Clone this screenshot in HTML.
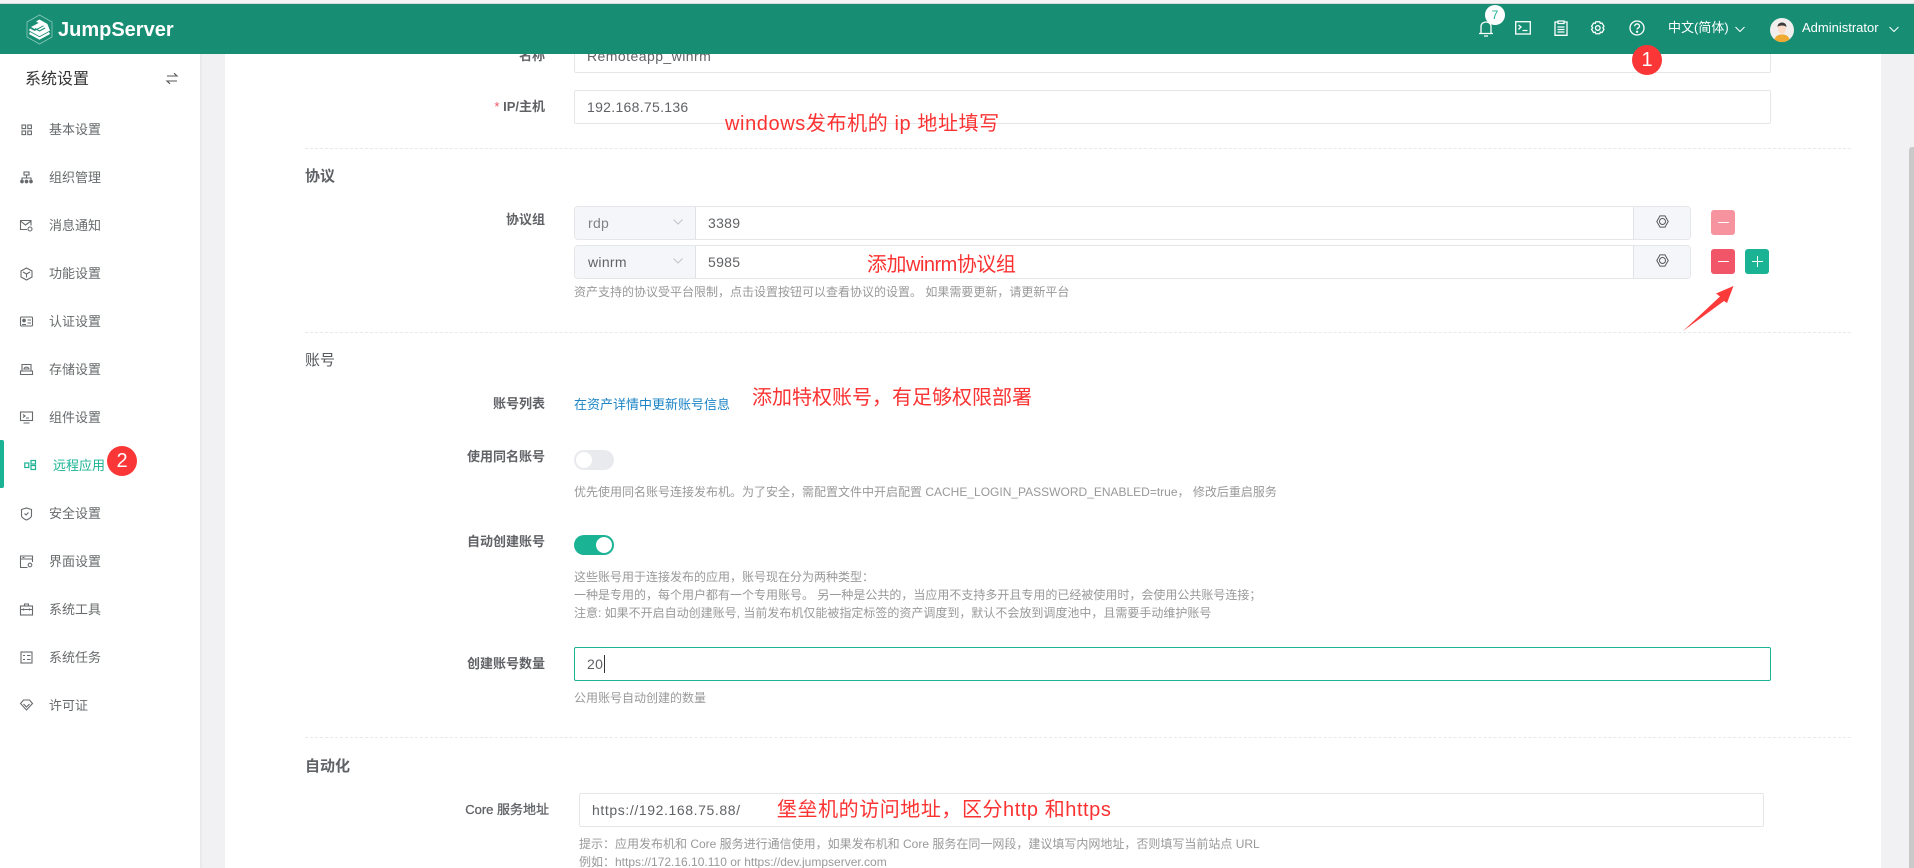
<!DOCTYPE html>
<html lang="zh-CN">
<head>
<meta charset="utf-8">
<title>JumpServer</title>
<style>
html,body{margin:0;padding:0;width:1914px;height:868px;overflow:hidden;background:#fff}
body{position:relative;font-family:"Liberation Sans","Noto Sans CJK SC",sans-serif;font-size:13px;color:#676a6c}
.a{position:absolute}
.t{position:absolute;white-space:nowrap;line-height:20px;height:20px}
.r{text-align:right;font-weight:700;color:#606266;font-size:13px}
.h{font-size:15px;font-weight:700;color:#5f6266;left:305px}
.m{font-size:13px;color:#676a6c;left:49px}
.help{font-size:12px;color:#999;left:574px;line-height:18px;height:18px}
.red{font-size:20px;color:#fb3232;line-height:28px;height:28px;font-family:"Liberation Sans","Noto Sans CJK SC",sans-serif}
.inp{position:absolute;box-sizing:border-box;border:1px solid #e5e6e7;background:#fff;border-radius:2px}
.v{font-size:14px;color:#606266;letter-spacing:.3px}
.dv{position:absolute;left:305px;width:1546px;height:0;border-top:1px dashed #e7eaec}
.btn{position:absolute;width:24px;height:25px;border-radius:3px}
.c{position:absolute;width:30px;height:30px;border-radius:50%;background:#fb3636;color:#fff;font-size:20px;line-height:30px;text-align:center}
svg{position:absolute;overflow:visible}
.ic{fill:none;stroke:#676a6c;stroke-width:1.1}
.tb{fill:none;stroke:#fff;stroke-width:1.3}
</style>
</head>
<body>
<!-- page regions -->
<div class="a" style="left:0;top:0;width:1914px;height:3px;background:#f4f4f5"></div>
<div class="a" style="left:0;top:3px;width:1914px;height:1px;background:#d8dbde"></div>
<div class="a" style="left:200px;top:54px;width:25px;height:814px;background:#f1f1f3"></div>
<div class="a" style="left:1881px;top:54px;width:33px;height:814px;background:#f1f1f3"></div>
<div class="a" style="left:1909px;top:147px;width:5px;height:721px;background:#c9c9c9;border-radius:3px 0 0 0"></div>

<!-- form -->
<div class="t r" style="left:445px;width:100px;top:46px">名称</div>
<div class="inp" style="left:574px;top:40px;height:33px;width:1197px"></div>
<div class="t v" style="left:587px;top:46px;letter-spacing:.45px">Remoteapp_winrm</div>

<div class="t r" style="left:445px;width:100px;top:97px"><span style="color:#ed5565;font-weight:400">* </span>IP/主机</div>
<div class="inp" style="left:574px;top:90px;width:1197px;height:34px"></div>
<div class="t v" style="left:587px;top:97px">192.168.75.136</div>
<div class="dv" style="top:148px"></div>

<div class="t h" style="top:167px">协议</div>
<div class="t r" style="left:445px;width:100px;top:210px">协议组</div>

<div class="inp" style="left:574px;top:206px;width:1117px;height:34px;border-radius:4px"></div>
<div class="a" style="left:575px;top:207px;width:121px;height:32px;background:#f5f6fa;border-right:1px solid #e0e2e8;box-sizing:border-box;border-radius:4px 0 0 4px"></div>
<div class="a" style="left:1633px;top:207px;width:57px;height:32px;background:#f5f6fa;border-left:1px solid #e0e2e8;box-sizing:border-box;border-radius:0 4px 4px 0"></div>
<div class="t v" style="left:588px;top:213px;color:#7f8287">rdp</div>
<div class="t v" style="left:708px;top:213px">3389</div>

<div class="inp" style="left:574px;top:245px;width:1117px;height:34px;border-radius:4px"></div>
<div class="a" style="left:575px;top:246px;width:121px;height:32px;background:#f5f6fa;border-right:1px solid #e0e2e8;box-sizing:border-box;border-radius:4px 0 0 4px"></div>
<div class="a" style="left:1633px;top:246px;width:57px;height:32px;background:#f5f6fa;border-left:1px solid #e0e2e8;box-sizing:border-box;border-radius:0 4px 4px 0"></div>
<div class="t v" style="left:588px;top:252px">winrm</div>
<div class="t v" style="left:708px;top:252px">5985</div>

<svg style="left:673px;top:218px" width="10" height="8"><path d="M.5 1.500 5 6 9.500 1.500" fill="none" stroke="#c0c4cc" stroke-width="1"/></svg>
<svg style="left:673px;top:257px" width="10" height="8"><path d="M.5 1.500 5 6 9.500 1.500" fill="none" stroke="#c0c4cc" stroke-width="1"/></svg>

<svg style="left:1656px;top:215px" width="13" height="13" viewBox="0 0 13 13"><path d="M4 .9h5l3.200 5.600L9 12.100H4L.8 6.500z" fill="none" stroke="#56585e"/><circle cx="6.500" cy="6.500" r="3" fill="none" stroke="#56585e"/></svg>
<svg style="left:1656px;top:254px" width="13" height="13" viewBox="0 0 13 13"><path d="M4 .9h5l3.200 5.600L9 12.100H4L.8 6.500z" fill="none" stroke="#56585e"/><circle cx="6.500" cy="6.500" r="3" fill="none" stroke="#56585e"/></svg>

<div class="btn" style="left:1711px;top:210px;background:#f6939f"></div>
<div class="a" style="left:1718px;top:222px;width:11px;height:1px;background:#fff"></div>
<div class="btn" style="left:1711px;top:249px;background:#f05568"></div>
<div class="a" style="left:1718px;top:261px;width:11px;height:1px;background:#fff"></div>
<div class="btn" style="left:1745px;top:249px;background:#1ab394"></div>
<div class="a" style="left:1752px;top:261px;width:11px;height:1px;background:#fff"></div>
<div class="a" style="left:1757px;top:256px;width:1px;height:11px;background:#fff"></div>

<div class="t help" style="top:283px">资产支持的协议受平台限制，点击设置按钮可以查看协议的设置。 如果需要更新，请更新平台</div>
<div class="dv" style="top:332px"></div>

<div class="t h" style="top:351px;font-weight:400;color:#55585c">账号</div>
<div class="t r" style="left:425px;width:120px;top:394px">账号列表</div>
<div class="t" style="left:574px;top:395px;color:#1c84c6;font-size:13px">在资产详情中更新账号信息</div>

<div class="t r" style="left:425px;width:120px;top:447px">使用同名账号</div>
<div class="a" style="left:574px;top:450px;width:40px;height:20px;border-radius:10px;background:#e9eaee"></div>
<div class="a" style="left:576px;top:452px;width:16px;height:16px;border-radius:50%;background:#fff"></div>
<div class="t help" style="top:483px">优先使用同名账号连接发布机。为了安全，需配置文件中开启配置 CACHE_LOGIN_PASSWORD_ENABLED=true， 修改后重启服务</div>

<div class="t r" style="left:425px;width:120px;top:532px">自动创建账号</div>
<div class="a" style="left:574px;top:535px;width:40px;height:20px;border-radius:10px;background:#1ab394"></div>
<div class="a" style="left:596px;top:537px;width:16px;height:16px;border-radius:50%;background:#fff"></div>
<div class="t help" style="top:568px">这些账号用于连接发布的应用，账号现在分为两种类型：</div>
<div class="t help" style="top:586px">一种是专用的，每个用户都有一个专用账号。 另一种是公共的，当应用不支持多开且专用的已经被使用时，会使用公共账号连接；</div>
<div class="t help" style="top:604px">注意: 如果不开启自动创建账号, 当前发布机仅能被指定标签的资产调度到，默认不会放到调度池中，且需要手动维护账号</div>

<div class="t r" style="left:425px;width:120px;top:654px">创建账号数量</div>
<div class="inp" style="left:574px;top:647px;width:1197px;height:34px;border-color:#1ab394"></div>
<div class="t v" style="left:587px;top:654px">20</div>
<div class="a" style="left:604px;top:655px;width:1px;height:18px;background:#333"></div>
<div class="t help" style="top:689px">公用账号自动创建的数量</div>
<div class="dv" style="top:737px"></div>

<div class="t h" style="top:757px">自动化</div>
<div class="t r" style="left:429px;width:120px;top:800px;font-weight:400;-webkit-text-stroke:.3px #606266">Core 服务地址</div>
<div class="inp" style="left:579px;top:793px;width:1185px;height:34px"></div>
<div class="t v" style="left:592px;top:800px;letter-spacing:.6px">https://192.168.75.88/</div>
<div class="t help" style="left:579px;top:835px">提示：应用发布机和 Core 服务进行通信使用，如果发布机和 Core 服务在同一网段，建议填写内网地址，否则填写当前站点 URL</div>
<div class="t help" style="left:579px;top:853px">例如：https://172.16.10.110 or https://dev.jumpserver.com</div>

<!-- sidebar -->
<div class="a" style="left:0;top:54px;width:200px;height:814px;background:#fff;box-shadow:1px 0 2px rgba(0,0,0,.06)"></div>
<div class="t" style="left:25px;top:70px;font-size:16px;color:#333;line-height:20px">系统设置</div>
<svg style="left:166px;top:72px" width="12" height="13" viewBox="0 0 12 13"><path d="M1 4h10L8 1.200M11 9H1l3 2.800" fill="none" stroke="#555" stroke-width="1.100"/></svg>

<div class="t m" style="top:120px">基本设置</div>
<div class="t m" style="top:168px">组织管理</div>
<div class="t m" style="top:216px">消息通知</div>
<div class="t m" style="top:264px">功能设置</div>
<div class="t m" style="top:312px">认证设置</div>
<div class="t m" style="top:360px">存储设置</div>
<div class="t m" style="top:408px">组件设置</div>
<div class="t m" style="top:456px;left:53px;color:#1ab394">远程应用</div>
<div class="t m" style="top:504px">安全设置</div>
<div class="t m" style="top:552px">界面设置</div>
<div class="t m" style="top:600px">系统工具</div>
<div class="t m" style="top:648px">系统任务</div>
<div class="t m" style="top:696px">许可证</div>
<div class="a" style="left:0;top:440px;width:4px;height:48px;background:#1ab394;border-radius:0 2px 2px 0"></div>

<svg style="left:20px;top:123px" width="13" height="13" viewBox="0 0 13 13" class="ic"><rect x="2" y="2" width="3.600" height="3.600"/><rect x="7.800" y="2" width="3.600" height="3.600"/><rect x="2" y="8" width="3.600" height="3.600"/><rect x="7.800" y="8" width="3.600" height="3.600"/></svg>
<svg style="left:20px;top:171px" width="13" height="13" viewBox="0 0 13 13" class="ic"><rect x="4" y="1" width="5" height="3"/><path d="M6.500 4v3M2 9V7h9v2"/><circle cx="2" cy="10.500" r="1.300" fill="#676a6c"/><circle cx="6.500" cy="10.500" r="1.300" fill="#676a6c"/><circle cx="11" cy="10.500" r="1.300" fill="#676a6c"/></svg>
<svg style="left:20px;top:219px" width="13" height="13" viewBox="0 0 13 13" class="ic"><path d="M7 10.500H.5v-9h10.500v5M.5 2l5 4 5.500-4"/><circle cx="10" cy="10" r="2"/></svg>
<svg style="left:20px;top:267px" width="13" height="13" viewBox="0 0 13 13" class="ic"><path d="M6.500 1 12 4v6l-5.500 3L1 10V4z"/><path d="M3 5l3.500 2L10 5M6.500 7v3.500"/></svg>
<svg style="left:20px;top:315px" width="13" height="13" viewBox="0 0 13 13" class="ic"><rect x=".5" y="2" width="12" height="9" rx="1"/><circle cx="4" cy="5.500" r="1.300" fill="#676a6c"/><path d="M2 9.500h4M7.500 5h3.500M7.500 8h3.500"/></svg>
<svg style="left:20px;top:363px" width="13" height="13" viewBox="0 0 13 13" class="ic"><path d="M2 8V1.500h9V8M.5 8h12v3.500H.5zM4 6c.5-2.500 4.500-2.500 5 0z"/></svg>
<svg style="left:20px;top:411px" width="13" height="13" viewBox="0 0 13 13" class="ic"><rect x=".5" y="1" width="12" height="8.500"/><path d="M3 3.500 5 5 3 6.500M6 7h3M3.500 12h6"/></svg>
<svg style="left:24px;top:459px" width="13" height="13" viewBox="0 0 13 13" fill="none" stroke="#1ab394" stroke-width="1.200"><rect x=".8" y="4" width="4" height="4.500"/><rect x="7" y="1.500" width="4.500" height="3.500"/><rect x="7" y="6.500" width="4.500" height="4"/></svg>
<svg style="left:20px;top:507px" width="13" height="14" viewBox="0 0 13 14" class="ic"><path d="M1.500 2.500 6.500 1l5 1.500v6c0 2-2.500 3.500-5 4.500-2.500-1-5-2.500-5-4.500z"/><path d="M4.500 6.500l1.500 1.500 2.500-2.500"/></svg>
<svg style="left:20px;top:555px" width="13" height="13" viewBox="0 0 13 13" class="ic"><path d="M12.500 7V1H.5v11.500h7M.5 4h12M2.500 2.500h2"/><circle cx="10" cy="10" r="1.800"/></svg>
<svg style="left:20px;top:603px" width="13" height="13" viewBox="0 0 13 13" class="ic"><rect x=".5" y="3" width="12" height="9"/><path d="M4.500 3V1h4v2M.5 6.500h12M3.500 5.500v2M9.500 5.500v2"/></svg>
<svg style="left:20px;top:651px" width="13" height="13" viewBox="0 0 13 13" class="ic"><rect x="1" y="1" width="11" height="11"/><path d="M3 4.500h2M7 4.500h3.500M3 8.500h2M7 8.500h3.500"/></svg>
<svg style="left:20px;top:699px" width="13" height="12" viewBox="0 0 13 12" class="ic"><path d="M3.500 1h6l3 3.500-6 6.500-6-6.500zM3.500 5l3 3 3-3"/></svg>

<!-- header -->
<div class="a" style="left:0;top:4px;width:1914px;height:50px;background:#178e74"></div>
<svg style="left:26px;top:14px" width="27" height="31" viewBox="0 0 27 31">
  <path d="M13.500 1 26 8v15l-12.500 7L1 23V8z" fill="none" stroke="#8cc9b9" stroke-width=".8"/>
  <path d="M5 13 13.500 8.500 18 11l-8.500 4.500z M10 7.500l3.500-2 8 4.500-3.500 2z" fill="#fff"/>
  <path d="M3.500 15.500 13.500 21l10-5.500M3.500 19 13.500 24.500l10-5.500" fill="none" stroke="#fff" stroke-width="2.200"/>
  <path d="M13.500 14.500l8-4.500 2 5.500-10 5.500-6-3.500z" fill="#fff"/>
  <path d="M9 14.500l4.500 2.500 5.500-3" fill="none" stroke="#178e74" stroke-width="1.200"/>
</svg>
<div class="t" style="left:58px;top:15px;height:30px;line-height:30px;font-size:20px;font-weight:700;color:#fff">JumpServer</div>

<svg style="left:1478px;top:19px" width="16" height="18" viewBox="0 0 16 18" class="tb"><path d="M1 14.500h14M3 14.500V7.500c0-6 10-6 10 0v7M6 17h4"/></svg>
<div class="a" style="left:1485px;top:5px;width:20px;height:20px;border-radius:50%;background:#fff;color:#1ab394;font-size:12px;line-height:20px;text-align:center">7</div>
<svg style="left:1515px;top:21px" width="16" height="14" viewBox="0 0 16 14" class="tb"><rect x=".7" y=".7" width="14.600" height="12.300"/><path d="M3.500 4 6 6 3.500 8.500M7.500 9.500h5"/></svg>
<svg style="left:1554px;top:20px" width="14" height="16" viewBox="0 0 14 16" class="tb"><path d="M4 2H1v13.300h12V2h-3M4 1h6v2.500H4zM3.500 7h7M3.500 9.500h7M3.500 12h7"/></svg>
<svg style="left:1591px;top:21px" width="14" height="15" viewBox="0 0 14 15" class="tb"><path d="M5 .8h4l.6 1.700 1.800-.4 2 3.400-1.200 1.500 1.200 1.500-2 3.400-1.800-.4-.6 1.700H5l-.6-1.700-1.800.4-2-3.400L1.800 7 .6 5.500l2-3.400 1.800.4z" transform="scale(.97)"/><circle cx="6.800" cy="7" r="2.300"/></svg>
<svg style="left:1629px;top:20px" width="16" height="16" viewBox="0 0 16 16" class="tb"><circle cx="8" cy="8" r="7"/><path d="M5.700 6.200c0-3 4.800-3 4.800 0 0 1.700-2.400 1.800-2.400 3.300"/><circle cx="8.100" cy="11.800" r=".5" fill="#fff"/></svg>

<div class="t" style="left:1668px;top:18px;color:#fff;font-size:13px">中文(简体)</div>
<svg style="left:1735px;top:26px" width="10" height="7"><path d="M.5 1 5 5.500 9.500 1" fill="none" stroke="#fff"/></svg>
<svg style="left:1770px;top:18px" width="24" height="24" viewBox="0 0 24 24">
  <circle cx="12" cy="12" r="12" fill="#f1efee"/>
  <path d="M4.500 21.500c1-4 4-5 7.500-5s6.500 1 7.500 5A12 12 0 0 1 4.500 21.500z" fill="#eeaa33"/>
  <ellipse cx="12" cy="10.500" rx="4" ry="5.500" fill="#fcdcc8"/>
  <path d="M7.500 9c0-6 9-6 9 0-2-2-7-2-9 0z" fill="#3a3a3a"/>
</svg>
<div class="t" style="left:1802px;top:18px;color:#fff;font-size:13px">Administrator</div>
<svg style="left:1889px;top:26px" width="10" height="7"><path d="M.5 1 5 5.500 9.500 1" fill="none" stroke="#fff"/></svg>

<!-- annotations -->
<div class="c" style="left:1632px;top:45px">1</div>
<div class="c" style="left:107px;top:446px">2</div>
<div class="t red" style="left:725px;top:110px;letter-spacing:.6px">windows发布机的 ip 地址填写</div>
<div class="t red" style="left:867px;top:251px;letter-spacing:-.5px">添加winrm协议组</div>
<div class="t red" style="left:752px;top:384px">添加特权账号，有足够权限部署</div>
<div class="t red" style="left:777px;top:796px;letter-spacing:.55px">堡垒机的访问地址，区分http 和https</div>
<svg style="left:1680px;top:280px" width="60" height="55" viewBox="0 0 60 55"><path d="M3 51 40 16.500 36 13.500 53.500 6 47 23 44 21z" fill="#fb3a3a"/></svg>
</body>
</html>
